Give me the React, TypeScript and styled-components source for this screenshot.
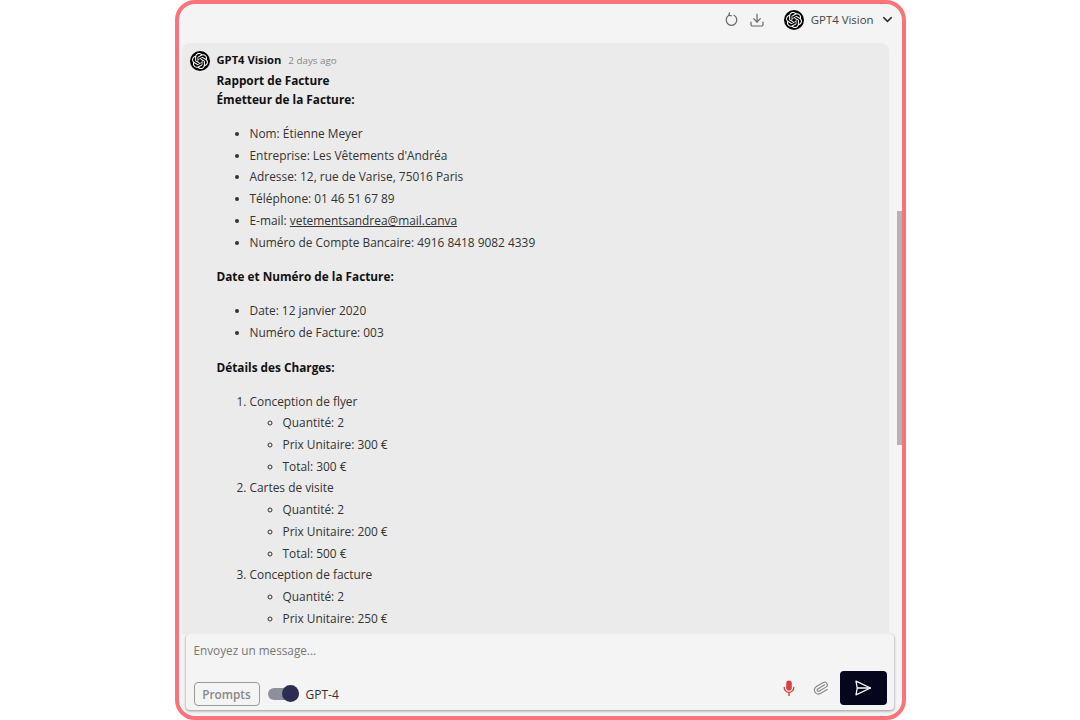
import styled, { createGlobalStyle } from 'styled-components';
import { SiOpenai } from 'react-icons/si';
import { Download, ChevronDown, Paperclip } from 'lucide-react';

const GlobalStyle = createGlobalStyle`
  html, body {
    margin: 0;
    padding: 0;
    height: 100%;
    background: #fff;
  }
  * {
    box-sizing: border-box;
  }
  body {
    font-family: "Open Sans", "Noto Sans", sans-serif;
  }
`;

const senderItems = [
  'Nom: Étienne Meyer',
  "Entreprise: Les Vêtements d'Andréa",
  'Adresse: 12, rue de Varise, 75016 Paris',
  'Téléphone: 01 46 51 67 89',
];

const charges = [
  { name: 'Conception de flyer', lines: ['Quantité: 2', 'Prix Unitaire: 300 €', 'Total: 300 €'] },
  { name: 'Cartes de visite', lines: ['Quantité: 2', 'Prix Unitaire: 200 €', 'Total: 500 €'] },
  { name: 'Conception de facture', lines: ['Quantité: 2', 'Prix Unitaire: 250 €'] },
];

const App: React.FC = () => {
  return (
    <Page>
      <GlobalStyle />
      <Frame>
        <TopBar>
          <ToolIcon>
            <svg width="15" height="15" viewBox="0 0 24 24" fill="none" stroke="#666" strokeWidth="2" strokeLinecap="round" strokeLinejoin="round">
              <path d="M8 5.2a8.5 8.5 0 1 0 8 0" />
              <path d="M8.5 1.5 8 5.5l4 .5" />
            </svg>
          </ToolIcon>
          <ToolIcon>
            <Download size={16} color="#666" strokeWidth={1.8} />
          </ToolIcon>
          <ModelPicker>
            <Avatar>
              <SiOpenai size={16} color="#fff" />
            </Avatar>
            <span>GPT4 Vision</span>
            <ChevronDown size={15} color="#333" strokeWidth={2.5} />
          </ModelPicker>
        </TopBar>
        <ChatArea>
          <Message>
            <Avatar>
              <SiOpenai size={16} color="#fff" />
            </Avatar>
            <MessageBody>
              <MessageHead>
                <b>GPT4 Vision</b>
                <small>2 days ago</small>
              </MessageHead>
              <Strong>Rapport de Facture</Strong>
              <Strong>Émetteur de la Facture:</Strong>
              <Bullets>
                {senderItems.map((item) => (
                  <li key={item}>{item}</li>
                ))}
                <li>
                  E-mail: <u>vetementsandrea@mail.canva</u>
                </li>
                <li>Numéro de Compte Bancaire: 4916 8418 9082 4339</li>
              </Bullets>
              <Strong>Date et Numéro de la Facture:</Strong>
              <Bullets>
                <li>Date: 12 janvier 2020</li>
                <li>Numéro de Facture: 003</li>
              </Bullets>
              <Strong>Détails des Charges:</Strong>
              <Numbers>
                {charges.map((charge) => (
                  <li key={charge.name}>
                    {charge.name}
                    <Circles>
                      {charge.lines.map((line) => (
                        <li key={line}>{line}</li>
                      ))}
                    </Circles>
                  </li>
                ))}
              </Numbers>
            </MessageBody>
          </Message>
          <ScrollThumb />
        </ChatArea>
        <Composer>
          <Placeholder>Envoyez un message...</Placeholder>
          <ComposerRow>
            <LeftTools>
              <PromptsButton>Prompts</PromptsButton>
              <Toggle>
                <i />
              </Toggle>
              <ModelLabel>GPT-4</ModelLabel>
            </LeftTools>
            <RightTools>
              <MicIcon width="12" height="16" viewBox="0 0 12 16" fill="#d94040">
                <rect x="3.2" y="0.5" width="5.6" height="10" rx="2.8" />
                <path d="M1.2 7.5a4.8 4.8 0 0 0 9.6 0" fill="none" stroke="#d94040" strokeWidth="1.3" strokeLinecap="round" />
                <path d="M6 12.5V15.5" fill="none" stroke="#d94040" strokeWidth="1.4" strokeLinecap="round" />
              </MicIcon>
              <ClipIcon size={16} color="#888" strokeWidth={1.7} />
              <SendButton>
                <svg width="18" height="16" viewBox="0 0 18 16" fill="none" stroke="#fff" strokeWidth="1.3" strokeLinejoin="round">
                  <path d="M2 1.2 16.5 8 2 14.8l1.2-6.8Z" />
                  <path d="M3.2 8h13.3" />
                </svg>
              </SendButton>
            </RightTools>
          </ComposerRow>
        </Composer>
      </Frame>
    </Page>
  );
};

const Page = styled.div`
  display: flex;
  justify-content: center;
  width: 100%;
  height: 720px;
  overflow: hidden;
`;

const Frame = styled.div`
  display: flex;
  flex-direction: column;
  width: 731px;
  height: 720px;
  border: 4px solid #f87479;
  border-radius: 20px;
  background: #f4f4f4;
  overflow: hidden;
`;

const TopBar = styled.div`
  display: flex;
  align-items: center;
  justify-content: flex-end;
  flex: none;
  height: 39px;
  padding: 0 7px 8px 0;
  color: #444;
  font-size: 11.4px;
`;

const ToolIcon = styled.div`
  display: flex;
  justify-content: center;
  align-items: center;
  width: 17px;
  height: 17px;
  margin-right: 9px;
`;

const ModelPicker = styled.div`
  display: flex;
  align-items: center;
  gap: 7px;
  margin-left: 9px;
  & > span {
    margin-right: -1px;
  }
`;

const Avatar = styled.div`
  display: flex;
  justify-content: center;
  align-items: center;
  flex: none;
  width: 20px;
  height: 20px;
  border-radius: 50%;
  background: #000;
`;

const ChatArea = styled.div`
  position: relative;
  flex: 1;
  min-height: 0;
  padding: 0 13px 0 3px;
  overflow: hidden;
`;

const Message = styled.div`
  display: flex;
  gap: 7px;
  min-height: 100%;
  padding: 8px 8px 0 8px;
  background: #ebebeb;
  border-radius: 8px 8px 0 0;
`;

const MessageBody = styled.div`
  color: #333;
  font-size: 11.9px;
  line-height: 21.7px;
`;

const MessageHead = styled.div`
  display: flex;
  align-items: baseline;
  gap: 7px;
  height: 20px;
  line-height: 17px;
  & > b {
    color: #111;
    font-size: 11.2px;
    font-weight: 700;
  }
  & > small {
    color: #888;
    font-size: 9.8px;
  }
`;

const Strong = styled.div`
  color: #111;
  font-weight: 700;
  line-height: 19px;
  font-size: 11.8px;
`;

const Bullets = styled.ul`
  margin: 14px 0 14px;
  padding: 0 0 0 33px;
  list-style: disc;
`;

const Numbers = styled.ol`
  margin: 14px 0 0;
  padding: 0 0 0 33px;
`;

const Circles = styled.ul`
  margin: 0;
  padding: 0 0 0 33px;
  list-style: circle;
`;

const ScrollThumb = styled.div`
  position: absolute;
  top: 168px;
  right: 0;
  width: 5px;
  height: 234px;
  background: #b4b4b4;
`;

const Composer = styled.div`
  display: flex;
  flex-direction: column;
  flex: none;
  height: 76px;
  margin: 0 8px 6px 7px;
  padding: 6px 7px 5px 8px;
  background: #f4f4f4;
  border-radius: 4px;
  box-shadow: 0 1px 3px rgba(0, 0, 0, 0.4);
`;

const Placeholder = styled.div`
  flex: 1;
  color: #777;
  font-size: 11.75px;
  line-height: 20px;
`;

const ComposerRow = styled.div`
  display: flex;
  align-items: flex-end;
`;

const LeftTools = styled.div`
  display: flex;
  align-items: center;
  margin-bottom: -1px;
`;

const PromptsButton = styled.div`
  width: 66px;
  height: 24px;
  border: 1px solid #999;
  border-radius: 4px;
  color: #888;
  font-size: 11.8px;
  font-weight: 600;
  line-height: 22px;
  text-align: center;
`;

const Toggle = styled.div`
  position: relative;
  width: 31px;
  height: 12px;
  margin-left: 8px;
  border-radius: 6px;
  background: #8f8f9c;
  & > i {
    position: absolute;
    top: -3px;
    right: 0;
    width: 17px;
    height: 17px;
    border-radius: 50%;
    background: #2c2c54;
  }
`;

const ModelLabel = styled.span`
  margin-left: 7px;
  color: #333;
  font-size: 12px;
`;

const RightTools = styled.div`
  display: flex;
  align-items: center;
  margin-left: auto;
  gap: 11px;
`;

const MicIcon = styled.svg`
  margin-right: 7px;
`;

const ClipIcon = styled(Paperclip)`
  transform: rotate(15deg);
`;

const SendButton = styled.div`
  display: flex;
  justify-content: center;
  align-items: center;
  width: 47px;
  height: 34px;
  border-radius: 4px;
  background: #05051e;
`;

export default App;
